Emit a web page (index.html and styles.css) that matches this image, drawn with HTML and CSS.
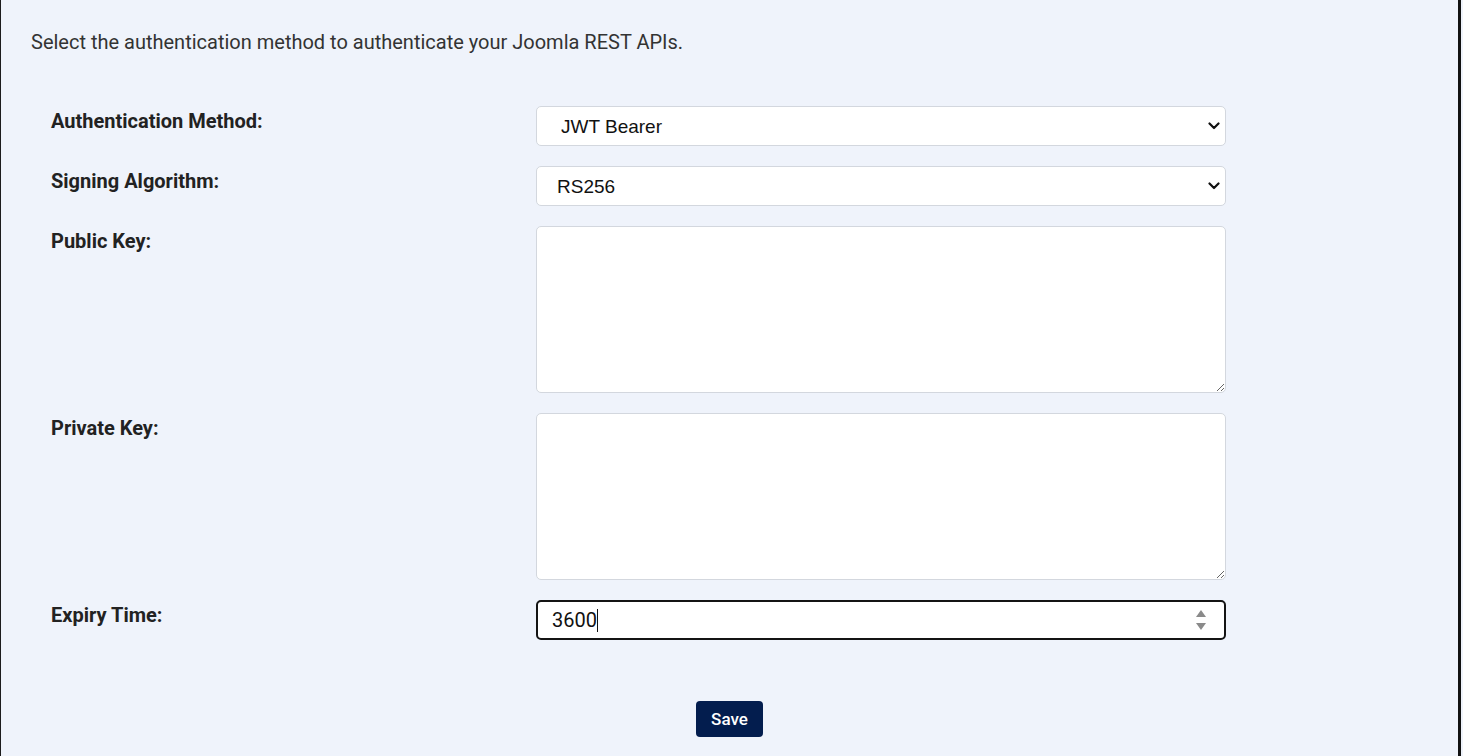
FILE: index.html
```html
<!DOCTYPE html>
<html lang="en">
<head>
<meta charset="utf-8">
<title>Authentication Method</title>
<link rel="stylesheet" href="styles.css">
</head>
<body>
<div class="page">
  <p class="intro">Select the authentication method to authenticate your Joomla REST APIs.</p>
  <form class="form">
    <div class="row">
      <label class="label" for="method">Authentication Method:</label>
      <div class="select-wrap">
        <select id="method" class="select select--wide">
          <option>JWT Bearer</option>
          <option>Basic Authentication</option>
          <option>API Key</option>
          <option>OAuth 2.0</option>
        </select>
        <svg class="chevron" width="12" height="8" viewBox="0 0 12 8"><path d="M1.5 1.5 6 6l4.5-4.5" fill="none" stroke="#111" stroke-width="2.2" stroke-linecap="round" stroke-linejoin="round"/></svg>
      </div>
    </div>
    <div class="row">
      <label class="label" for="algo">Signing Algorithm:</label>
      <div class="select-wrap">
        <select id="algo" class="select">
          <option>RS256</option>
          <option>HS256</option>
        </select>
        <svg class="chevron" width="12" height="8" viewBox="0 0 12 8"><path d="M1.5 1.5 6 6l4.5-4.5" fill="none" stroke="#111" stroke-width="2.2" stroke-linecap="round" stroke-linejoin="round"/></svg>
      </div>
    </div>
    <div class="row">
      <label class="label" for="pub">Public Key:</label>
      <textarea id="pub" class="textarea"></textarea>
    </div>
    <div class="row">
      <label class="label" for="priv">Private Key:</label>
      <textarea id="priv" class="textarea"></textarea>
    </div>
    <div class="row">
      <label class="label" for="exp">Expiry Time:</label>
      <div class="number-wrap">
        <input id="exp" class="number" type="number" value="3600">
        <span class="caret"></span>
        <svg class="spinner" width="12" height="24" viewBox="0 0 12 24"><path d="M6 2 11 9H1z" fill="#8a8a8a"/><path d="M6 22 11 15H1z" fill="#8a8a8a"/></svg>
      </div>
    </div>
    <div class="actions">
      <button type="button" class="btn">Save</button>
    </div>
  </form>
</div>
</body>
</html>
```

FILE: styles.css
```css
* { box-sizing: border-box; }
html, body { margin: 0; padding: 0; }
body {
  width: 1463px;
  height: 756px;
  overflow: hidden;
  background: #eff3fb;
  font-family: Roboto, "Liberation Sans", Arial, sans-serif;
}
.page {
  width: 1461px;
  height: 756px;
  background: #eff3fb;
  border-left: 1px solid #1c1c1c;
  border-right: 3px solid #111;
  padding: 30px 30px 0 30px;
}
.intro {
  margin: 0;
  font-size: 20px;
  line-height: 24px;
  color: #333;
}
.form {
  margin-top: 52px;
  padding-left: 20px;
  display: flex;
  flex-direction: column;
  gap: 20px;
}
.row {
  display: grid;
  grid-template-columns: 485px 690px;
  align-items: start;
}
.label {
  padding-top: 3px;
  font-size: 20px;
  line-height: 24px;
  font-weight: 700;
  color: #222;
}
.select-wrap, .number-wrap {
  position: relative;
  width: 690px;
}
.select {
  -webkit-appearance: none;
  appearance: none;
  display: block;
  width: 690px;
  height: 40px;
  padding: 0 40px 0 20px;
  background: #fff;
  border: 1px solid #d3d7de;
  border-radius: 5px;
  font-family: "Liberation Sans", Arial, sans-serif;
  font-size: 19px;
  color: #111;
  outline: none;
}
.select--wide { padding-left: 24px; }
.chevron {
  position: absolute;
  right: 6px;
  top: 16px;
}
.textarea {
  display: block;
  width: 690px;
  height: 167px;
  background: #fff;
  border: 1px solid #d3d7de;
  border-radius: 5px;
  font-family: Roboto, sans-serif;
  font-size: 16px;
  resize: vertical;
  outline: none;
}
.number {
  -moz-appearance: textfield;
  display: block;
  width: 690px;
  height: 40px;
  padding: 0 40px 0 14px;
  background: #fff;
  border: 2px solid #141414;
  border-radius: 5px;
  font-family: Roboto, sans-serif;
  font-size: 20px;
  color: #111;
  outline: none;
}
.number::-webkit-inner-spin-button,
.number::-webkit-outer-spin-button {
  -webkit-appearance: none;
  margin: 0;
}
.caret {
  position: absolute;
  left: 61px;
  top: 9px;
  width: 1px;
  height: 23px;
  background: #111;
}
.spinner {
  position: absolute;
  right: 19px;
  top: 8px;
}
.actions {
  display: flex;
  justify-content: center;
  margin-top: 41px;
  padding-right: 20px;
}
.btn {
  width: 67px;
  height: 36px;
  background: #031d4e;
  color: #fff;
  border: none;
  border-radius: 4px;
  font-family: Roboto, sans-serif;
  font-size: 17px;
  font-weight: 500;
  cursor: pointer;
}
```
